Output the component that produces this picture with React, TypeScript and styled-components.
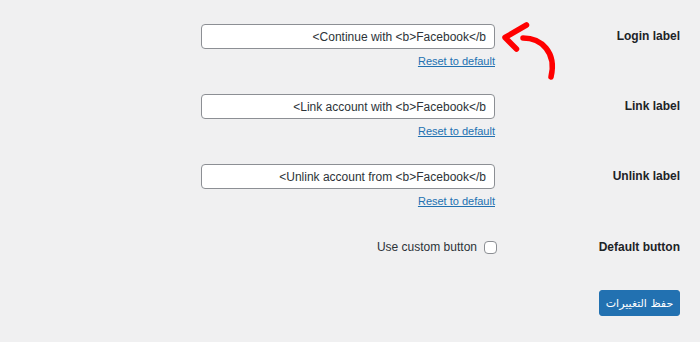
import React from "react";
import styled, { createGlobalStyle } from "styled-components";

const GlobalStyle = createGlobalStyle`
  html, body {
    margin: 0;
    padding: 0;
    background: #f0f0f1;
  }
  body {
    font-family: "Liberation Sans", "DejaVu Sans", Arial, sans-serif;
    color: #1d2327;
    font-size: 12px;
  }
`;

const Page = styled.div`
  position: relative;
  width: 700px;
  height: 342px;
  box-sizing: border-box;
  padding: 10px 20px 0 0;
  direction: rtl;
  overflow: hidden;
`;

const Form = styled.form`
  display: flex;
  flex-direction: column;
`;

const Row = styled.div<{ $bottom?: number }>`
  display: grid;
  grid-template-columns: 185px 294px;
  padding: 14px 0 ${(p) => p.$bottom ?? 12}px;
`;

const Label = styled.label<{ $line?: number }>`
  font-weight: bold;
  font-size: 12px;
  line-height: ${(p) => p.$line ?? 24}px;
  color: #1d2327;
  text-align: right;
`;

const Field = styled.div`
  display: flex;
  flex-direction: column;
  align-items: flex-start;
  gap: 6px;
`;

const TextInput = styled.input`
  box-sizing: border-box;
  width: 294px;
  height: 25px;
  padding: 0 8px;
  border: 1px solid #8c8f94;
  border-radius: 4px;
  background: #fff;
  color: #2c3338;
  font-family: "Liberation Sans", "DejaVu Sans", Arial, sans-serif;
  font-size: 12px;
  direction: rtl;
  text-align: right;
  outline: none;
`;

const ResetLink = styled.a`
  color: #2271b1;
  font-size: 11px;
  line-height: 13px;
  text-decoration: underline;
  cursor: pointer;
`;

const CheckLine = styled.label`
  display: flex;
  align-items: center;
  gap: 7px;
  height: 26px;
  font-size: 12px;
  color: #2c3338;
`;

const Checkbox = styled.input`
  appearance: none;
  box-sizing: border-box;
  width: 13px;
  height: 13px;
  margin: 0 -2px 0 0;
  border: 1px solid #8c8f94;
  border-radius: 4px;
  background: #fff;
`;

const Submit = styled.div`
  display: flex;
  margin-top: 18px;
`;

const SaveButton = styled.button`
  box-sizing: border-box;
  width: 81px;
  height: 26px;
  padding: 0;
  border: 1px solid #2271b1;
  border-radius: 3px;
  background: #2271b1;
  color: #fff;
  font-family: "DejaVu Sans", "Noto Sans", sans-serif;
  font-size: 11px;
  white-space: nowrap;
  cursor: pointer;
`;

const Arrow = styled.svg`
  position: absolute;
  left: 0;
  top: 0;
  pointer-events: none;
`;

const fields = [
  { label: "Login label", value: "Continue with <b>Facebook</b>" },
  { label: "Link label", value: "Link account with <b>Facebook</b>" },
  { label: "Unlink label", value: "Unlink account from <b>Facebook</b>" },
];

export default function App() {
  return (
    <>
      <GlobalStyle />
      <Page dir="rtl">
        <Form onSubmit={(e) => e.preventDefault()}>
          {fields.map((f) => (
            <Row key={f.label}>
              <Label>{f.label}</Label>
              <Field>
                <TextInput type="text" defaultValue={f.value} dir="rtl" />
                <ResetLink>Reset to default</ResetLink>
              </Field>
            </Row>
          ))}
          <Row>
            <Label $line={26}>Default button</Label>
            <CheckLine>
              <Checkbox type="checkbox" />
              <span dir="ltr">Use custom button</span>
            </CheckLine>
          </Row>
          <Submit>
            <SaveButton type="submit">حفظ التغييرات</SaveButton>
          </Submit>
        </Form>
        <Arrow width="700" height="342" viewBox="0 0 700 342">
          <g fill="none" stroke="#ff0000" strokeWidth="5.5" strokeLinecap="round" strokeLinejoin="round">
            <path d="M526.5 25 L505 37.5 L516.5 49" />
            <path d="M523 38 C541 38 557 52 551 77" />
          </g>
        </Arrow>
      </Page>
    </>
  );
}
